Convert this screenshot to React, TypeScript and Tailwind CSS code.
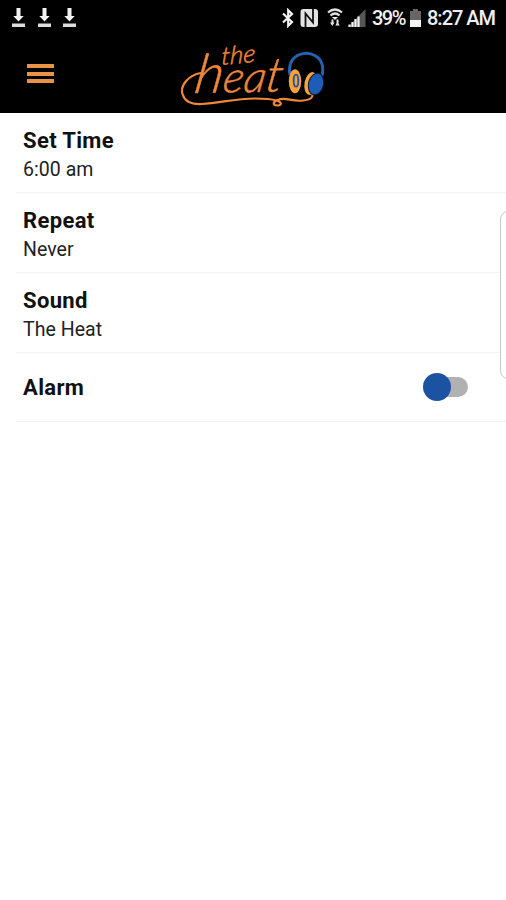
const ORANGE = '#ee8738';

function DownloadIcon() {
    return (
        <svg width="15" height="20" viewBox="0 0 15 20" fill="#f2f2f2">
            <path d="M5.500 0h4v8h3.200L7.500 13.500 2.300 8h3.200z" />
            <path d="M1 15.500h13v3.500H1z" fill="#dcdcdc" />
        </svg>
    );
}

function StatusIcons() {
    return (
        <svg width="86" height="20" viewBox="281 8 86 20" fill="none">
            <path
                d="M283 13.500l9 8.500-3.800 3.800V10.200L292 14l-9 8.500"
                stroke="#f2f2f2"
                strokeWidth="2.200"
            />
            <rect x="300.500" y="9" width="17.500" height="18" rx="3" fill="#e4e4e4" />
            <path
                d="M305.500 27V13.500L313 22.500V9"
                stroke="#111"
                strokeWidth="1.800"
            />
            <path
                d="M328 12.500Q335 6.500 342 12.500M330.500 15.500Q335 11.500 339.500 15.500"
                stroke="#e0e0e0"
                strokeWidth="2.200"
            />
            <path d="M332 17h6l-3 3z" fill="#f2f2f2" />
            <path
                d="M332.500 19.500v4M337.500 19.500v4"
                stroke="#e6e6e6"
                strokeWidth="2"
            />
            <path d="M330 22.500h4.500L332.300 26zM335.300 25.500h4.500L337.500 22z" fill="#e6e6e6" />
            <path d="M365.500 9v18h-17.500z" fill="#555" />
            <path
                d="M349.500 27v-2.500M352.500 27v-5M355.500 27v-8M358.500 27V16.500"
                stroke="#f2f2f2"
                strokeWidth="2.200"
            />
        </svg>
    );
}

function BatteryIcon() {
    return (
        <svg width="11" height="18" viewBox="0 0 11 18">
            <path d="M3 0h5v2h3v9H0V2h3z" fill="#666" />
            <path d="M0 11h11v7H0z" fill="#f6f6f6" />
        </svg>
    );
}

function StatusBar() {
    return (
        <div className="flex h-9 items-center justify-between pr-[10px] pl-[11px] text-[20px] text-[#f0f0f0]">
            <div className="flex gap-[10.5px]">
                <DownloadIcon />
                <DownloadIcon />
                <DownloadIcon />
            </div>
            <div className="flex items-center font-medium">
                <StatusIcons />
                <span className="ml-[5px] w-[34px] tracking-[-1.5px]">39%</span>
                <span className="ml-1">
                    <BatteryIcon />
                </span>
                <span className="ml-[6px] w-[69px] tracking-[-1px] whitespace-nowrap">
                    8:27 AM
                </span>
            </div>
        </div>
    );
}

function Logo() {
    return (
        <svg
            width="160"
            height="76"
            viewBox="0 0 160 76"
            fill="none"
            className="font-[Lato]"
        >
            <g
                fill={ORANGE}
                stroke={ORANGE}
                strokeWidth="0.500"
                fontStyle="italic"
                fontWeight="300"
            >
                <text
                    fontSize="25"
                    textLength="34"
                    lengthAdjust="spacingAndGlyphs"
                    transform="translate(46 29) rotate(-5) skewX(-8)"
                >
                    the
                </text>
                <text
                    textLength="88"
                    lengthAdjust="spacingAndGlyphs"
                    transform="translate(18 57) rotate(-1) skewX(-10)"
                >
                    <tspan fontSize="54">h</tspan>
                    <tspan fontSize="43">ea</tspan>
                    <tspan fontSize="48">t</tspan>
                </text>
            </g>
            <path
                d="M26 37C13 39 5 50 7.500 58C10 67 18 68.500 27 68C45 67 60 62.500 80 62.500C90 62.500 96 63 102 64.500C108 67 106 69.500 102 69.500C97 69 98 65 104 63.500C110 61 118 66 128 64.500C136 63.500 138 62 137.500 57"
                stroke={ORANGE}
                strokeWidth="2.200"
            />
            <path
                d="M115 39C110 13 144 11 147.500 30C148 34 148 38 146 42"
                stroke="#2462b4"
                strokeWidth="3"
            />
            <ellipse cx="120" cy="45.300" rx="6.200" ry="12" fill="#f7a23c" />
            <ellipse
                cx="121"
                cy="44.700"
                rx="2.300"
                ry="6"
                fill="#e5a55c"
                stroke="#2a4f92"
                strokeWidth="1.800"
            />
            <ellipse
                cx="136"
                cy="47.500"
                rx="6.500"
                ry="11.500"
                fill="#f7a23c"
                transform="rotate(10 136 47.500)"
            />
            <ellipse
                cx="141"
                cy="48"
                rx="7.500"
                ry="11"
                fill="#1d5cb8"
                stroke="#0a1830"
                transform="rotate(14 141 48)"
            />
        </svg>
    );
}

interface SettingRowProps {
    title: string;
    value: string;
}

function SettingRow({ title, value }: SettingRowProps) {
    return (
        <div className="ml-4 h-20 border-b border-[#f4f4f4] pt-[14px] pl-[7px]">
            <div className="text-[22px] leading-[28px] font-bold tracking-[0.35px]">
                {title}
            </div>
            <div className="text-[19.5px] leading-[29px] tracking-[0.05px] text-[#222]">
                {value}
            </div>
        </div>
    );
}

function Toggle() {
    return (
        <div className="flex h-7 w-[45px] items-center">
            <span className="z-10 size-7 shrink-0 rounded-full bg-[#1b53a2]" />
            <span className="-ml-4 h-5 w-[33px] shrink-0 rounded-full bg-[#b1b1b1]" />
        </div>
    );
}

export default function App() {
    return (
        <div className="relative h-[900px] w-[506px] overflow-hidden bg-white font-[Roboto,sans-serif] text-[#111]">
            <header className="h-[113px] bg-black">
                <StatusBar />
                <div className="flex h-[76px]">
                    <div className="flex w-[175px] flex-col gap-[3.5px] pt-[28px] pl-[27px]">
                        <span className="h-1 w-[27px] bg-[#e99445]" />
                        <span className="h-1 w-[27px] bg-[#e99445]" />
                        <span className="h-1 w-[27px] bg-[#e99445]" />
                    </div>
                    <Logo />
                </div>
            </header>
            <main>
                <SettingRow title="Set Time" value="6:00 am" />
                <SettingRow title="Repeat" value="Never" />
                <SettingRow title="Sound" value="The Heat" />
                <div className="ml-4 flex h-[69px] items-center justify-between border-b border-[#f4f4f4] pr-[38px] pl-[7px]">
                    <span className="text-[22px] font-bold tracking-[0.35px]">
                        Alarm
                    </span>
                    <Toggle />
                </div>
            </main>
            <div className="absolute top-[211px] -right-[10px] h-[168px] w-4 rounded-[8px] border border-[#c8c8c8] bg-white" />
        </div>
    );
}
